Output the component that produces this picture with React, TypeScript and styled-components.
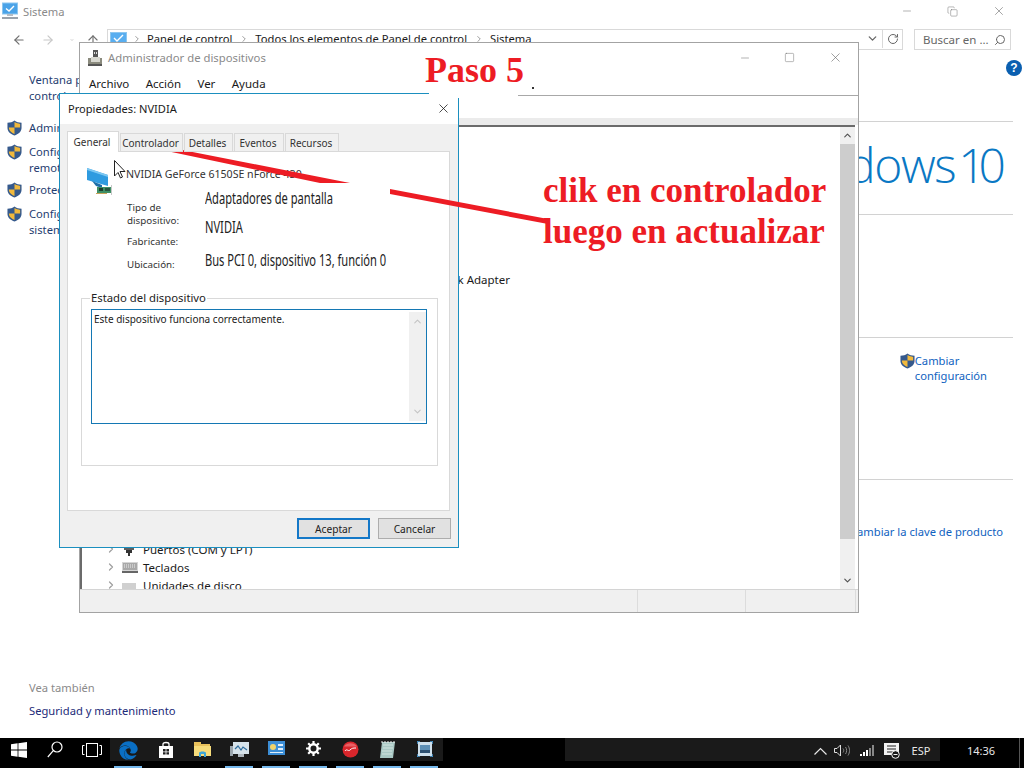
import React from "react";
import styled, { createGlobalStyle } from "styled-components";
import { ChevronRight, ChevronUp, ChevronDown, ArrowLeft, ArrowRight, ArrowUp, RotateCw, Search, Minus, Square, X, Copy } from "lucide-react";
import { FaEdge } from "react-icons/fa";

const Global = createGlobalStyle`
  html, body { margin: 0; padding: 0; background: #fff; overflow: hidden; }
  * { box-sizing: border-box; }
  body { font-family: "Noto Sans", "Open Sans", sans-serif; font-size: 11.2px; color: #1a1a1a; }
`;

const Desktop = styled.div`
  position: relative; width: 1024px; height: 768px; overflow: hidden;
  display: flex; flex-direction: column; background: #fff;
`;

/* --- Sistema window --- */
const SystemWindow = styled.div`flex: 1; display: flex; flex-direction: column; min-height: 0;`;
const TitleBar = styled.div`
  height: 22px; display: flex; align-items: center; padding: 0 2px 0 1px; gap: 4px; color: #8a8a8a;
`;
const Spacer = styled.div`flex: 1;`;
const WinButtons = styled.div`display: flex; align-items: center;`;
const WinButton = styled.div<{ $w: number }>`
  width: ${p => p.$w}px; display: flex; justify-content: center; align-items: center; color: #666;
`;
const NavRow = styled.div`
  margin-top: 7px; height: 21px; display: flex; align-items: center; color: #8a8a8a;
`;
const NavButtons = styled.div`width: 107px; flex: none; display: flex; align-items: center; padding-left: 12px;`;
const NavBtn = styled.div<{ $w: number; $faint?: boolean; $lead?: number }>`
  width: ${p => p.$w}px; flex: none; margin-left: ${p => p.$lead ?? 0}px; display: flex; justify-content: center;
  color: ${p => (p.$faint ? "#c8c8c8" : "#707070")};
`;
const Address = styled.div`
  width: 796px; height: 21px; border: 1px solid #d9d9d9; display: flex; align-items: center;
  padding: 0 0 2px 2px; color: #1a1a1a;
`;
const Crumb = styled.span`display: inline-flex; align-items: center; white-space: nowrap;`;
const CrumbSep = styled.span<{ $w: number }>`display: inline-flex; width: ${p => p.$w}px; justify-content: center; color: #8a8a8a;`;
const AddressTail = styled.div`margin-left: auto; display: flex; height: 19px; align-items: center;`;
const AddressCell = styled.div<{ $line?: boolean }>`
  width: 20px; height: 100%; display: flex; align-items: center; justify-content: center; color: #666;
  ${p => (p.$line ? "border-left: 1px solid #d9d9d9;" : "")}
`;
const SearchBox = styled.div`
  margin-left: 11px; width: 97px; height: 21px; border: 1px solid #d9d9d9; display: flex; align-items: center;
  justify-content: space-between; padding: 0 4px 0 8px; color: #666; font-size: 11.5px; white-space: nowrap;
`;
const Body = styled.div`flex: 1; display: flex; min-height: 0;`;
const Sidebar = styled.div`
  width: 240px; padding: 22px 0 19px 7px; display: flex; flex-direction: column; white-space: nowrap;
`;
const SideLink = styled.div<{ $top: number }>`
  display: flex; gap: 7px; margin-top: ${p => p.$top}px; line-height: 16px; color: #1f3d70;
`;
const SideIconSlot = styled.div`width: 15px; height: 16px; display: flex; align-items: center;`;
const SeeAlso = styled.div`margin-top: auto; margin-left: 22px;`;
const SeeAlsoTitle = styled.div`color: #8a8a8a; line-height: 16px; margin-bottom: 7px;`;
const SeeAlsoLink = styled.div`color: #1c2a78; line-height: 16px;`;
const Main = styled.div`flex: 1; margin-right: 11px; display: flex; flex-direction: column;`;
const HelpRow = styled.div`height: 71px; padding-top: 10px; display: flex; justify-content: flex-end; margin-right: -9px;`;
const HelpIcon = styled.div`
  width: 16px; height: 16px; border-radius: 50%; background: #0a5fb0; color: #fff; font-weight: 700; font-size: 12px;
  display: flex; align-items: center; justify-content: center; font-family: "Liberation Sans", sans-serif;
`;
const Section = styled.section<{ $h?: number }>`
  border-top: 1px solid #d2d2d2; ${p => (p.$h ? `height: ${p.$h}px;` : "flex: 1;")}
`;
const Logo = styled.div`
  display: flex; justify-content: flex-end; padding: 10px 14px 0 0; font-family: "Open Sans", sans-serif;
  font-weight: 300; font-size: 48px; line-height: 65px; color: #0a78c4; white-space: nowrap; letter-spacing: -1.4px;
`;
const LogoNumber = styled.span`margin-left: 3px; letter-spacing: -7px;`;
const ChangeLink = styled.div`
  display: flex; justify-content: flex-end; padding: 15px 26px 0 0; color: #0f62c0; line-height: 15px;
`;
const ProductKey = styled.div`padding: 44px 10px 0 0; text-align: right; color: #0f62c0; line-height: 16px; white-space: nowrap;`;

/* --- Device manager --- */
const DeviceWindow = styled.div`
  position: absolute; left: 79px; top: 42px; width: 780px; height: 571px; background: #fff;
  border: 1px solid #a3a3a3; display: flex; flex-direction: column;
`;
const DeviceTitle = styled.div`
  height: 29px; display: flex; align-items: center; padding-left: 8px; gap: 6px; color: #8a8a8a; font-size: 11.3px; flex: none;
`;
const MenuBar = styled.div`
  height: 24px; flex: none; border-bottom: 1px solid #a8a8a8; display: flex; align-items: center; padding: 0 0 1px 9px; gap: 16.4px; color: #1a1a1a; font-size: 11.5px;
`;
const Toolbar = styled.div`height: 22px; flex: none;`;
const Band = styled.div`height: 7px; flex: none; background: #ebebeb;`;
const Pane = styled.div`
  flex: 1; min-height: 0; display: flex; border-top: 2px solid #6b6b6b; margin-right: 3px; overflow: hidden;
`;
const TreeArea = styled.div`
  flex: 1; border-left: 2px solid #6b6b6b; display: flex; flex-direction: column; justify-content: flex-end; overflow: hidden; padding-left: 25px; font-size: 11.5px;
`;
const TreeRows = styled.div`margin-bottom: -5px;`;
const TreeRow = styled.div`height: 18px; display: flex; align-items: center; color: #1a1a1a; white-space: nowrap;`;
const TreeChildRow = styled(TreeRow)`width: 403px; justify-content: flex-end; margin-bottom: 252px;`;
const TreeChevron = styled.div`width: 14px; margin-left: -2px; margin-right: 3px; color: #a0a0a0; display: flex;`;
const TreeIcon = styled.div`width: 21px; display: flex;`;
const Scrollbar = styled.div`width: 15px; background: #f0f0f0; display: flex; flex-direction: column; flex: none;`;
const ScrollEnd = styled.div<{ $bottom?: boolean }>`
  height: 17px; flex: none; display: flex; align-items: center; justify-content: center; color: #505050;
  ${p => (p.$bottom ? "margin-top: auto;" : "")}
`;
const ScrollThumb = styled.div`height: 395px; flex: none; background: #cdcdcd;`;
const StatusBar = styled.div`
  height: 23px; flex: none; background: #f0f0f0; border-top: 1px solid #d4d4d4;
  display: grid; grid-template-columns: 558px 108px 110px 1fr;
`;
const StatusCell = styled.div`border-right: 1px solid #dcdcdc;`;

/* --- Properties dialog --- */
const Dialog = styled.div`
  position: absolute; left: 59px; top: 93px; width: 400px; height: 455px; background: #fff;
  border: 1px solid #1b8fbf; display: flex; flex-direction: column;
`;
const DialogTitle = styled.div`
  height: 30px; flex: none; display: flex; align-items: center; justify-content: space-between; padding: 0 7px 2px 8px; color: #1a1a1a; font-size: 11.1px;
`;
const DialogBody = styled.div`flex: 1; background: #f0f0f0; padding: 7px 7px 0 7px; display: flex; flex-direction: column; min-height: 0;`;
const Tabs = styled.div`display: flex; height: 21px; flex: none; position: relative; z-index: 1;`;
const Tab = styled.div<{ $w: number; $active?: boolean }>`
  width: ${p => p.$w}px; margin-left: ${p => (p.$active ? 0 : 1)}px;
  height: ${p => (p.$active ? 21 : 19)}px; margin-top: ${p => (p.$active ? 0 : 2)}px;
  background: ${p => (p.$active ? "#fff" : "#f0f0f0")};
  border: 1px solid #d9d9d9; ${p => (p.$active ? "border-bottom: none;" : "")}
  display: flex; align-items: center; justify-content: center; padding-right: 2px; color: #333; font-size: 10px; white-space: nowrap;
`;
const TabPanel = styled.div`
  margin-top: -1px; margin-right: 1px; height: 360px; flex: none; background: #fff; border: 1px solid #d9d9d9; position: relative;
`;
const DeviceHeader = styled.div`
  height: 35px; padding: 15px 0 0 19px; display: flex; gap: 13px; color: #333; font-size: 10.6px; line-height: 14px; white-space: nowrap;
`;
const Details = styled.div`display: flex; height: 104px; padding-left: 59px;`;
const Labels = styled.div`width: 78px; flex: none; padding-top: 14px; color: #333; font-size: 9.8px; line-height: 13px;`;
const LabelItem = styled.div<{ $top?: number }>`margin-top: ${p => p.$top ?? 0}px;`;
const Values = styled.div`
  padding-top: 1px; color: #222; font-size: 16px; line-height: 20px; white-space: nowrap;
  transform: scaleX(0.695); transform-origin: left center;
`;
const ValueItem = styled.div<{ $top?: number }>`margin-top: ${p => p.$top ?? 0}px;`;
const Group = styled.fieldset`
  margin: 0 0 0 13px; padding: 4px 0 0 9px; width: 357px; height: 175px; border: 1px solid #d9d9d9; min-width: 0;
`;
const GroupLegend = styled.legend`margin-left: -1px; padding: 0 1px; font-size: 11.3px; line-height: 14px; color: #222;`;
const StatusBox = styled.div`
  width: 336px; height: 115px; border: 1px solid #1478b4; display: flex; font-size: 10px; color: #222;
`;
const StatusText = styled.div`flex: 1; padding: 2px 2px; line-height: 14px;`;
const MiniScroll = styled.div`
  width: 17px; margin: 2px 0 2px; background: #f0f0f0; display: flex; flex-direction: column; justify-content: space-between; align-items: center; padding: 4px 0; color: #c4c4c4;
`;
const DialogFooter = styled.div`display: flex; justify-content: flex-end; gap: 8px; margin-top: 7px;`;
const DialogButton = styled.div<{ $primary?: boolean }>`
  width: 73px; height: 21px; background: #e1e1e1; display: flex; align-items: center; justify-content: center; color: #222; font-size: 10.2px;
  border: ${p => (p.$primary ? "2px solid #1478c8" : "1px solid #adadad")};
`;

/* --- Annotations --- */
const Overlay = styled.svg`position: absolute; left: 0; top: 0; width: 1024px; height: 768px; pointer-events: none;`;
const WhitePatch = styled.div`
  position: absolute; left: 429px; top: 55px; width: 89px; height: 43px; background: #fff;
`;
const RedNote = styled.div<{ $x: number; $y: number; $size: number }>`
  position: absolute; left: ${p => p.$x}px; top: ${p => p.$y}px; font-family: "Liberation Serif", serif; font-weight: 700;
  font-size: ${p => p.$size}px; line-height: 40px; color: #ed1c24; white-space: nowrap;
`;
const Dot = styled.div`position: absolute; left: 532px; top: 87px; width: 2px; height: 2px; background: #333;`;

/* --- Taskbar --- */
const Taskbar = styled.div`
  height: 30px; flex: none; background: #000; display: flex; color: #fff; position: relative;
`;
const TaskGroup = styled.div`
  display: flex; background: linear-gradient(#1a1a1a 0 23px, #000 23px);
`;
const TaskBtn = styled.div<{ $active?: boolean }>`
  width: 37px; height: 30px; position: relative; display: flex; align-items: flex-start; justify-content: center; padding-top: 3px;
  &::after {
    content: ""; position: absolute; left: 4px; right: 5px; bottom: 0; height: 2px;
    background: ${p => (p.$active ? "#76b9ed" : "transparent")};
  }
`;
const ShellBtn = styled.div<{ $w: number }>`
  width: ${p => p.$w}px; height: 30px; display: flex; align-items: center; justify-content: center; padding-bottom: 7px;
`;
const Blackout = styled.div`margin: 6px 0 0 7px; width: 115px; height: 18px; background: #000;`;
const Filler = styled.div`flex: 1; background: linear-gradient(#1a1a1a 0 23px, #000 23px);`;
const Tray = styled.div`display: flex; width: 132px; background: linear-gradient(#1a1a1a 0 23px, #000 23px);`;
const TrayCell = styled.div<{ $w: number }>`
  width: ${p => p.$w}px; height: 23px; display: flex; align-items: center; justify-content: center; font-size: 11px; color: #e8e8e8; padding-top: 2px;
`;
const Clock = styled.div`
  width: 84px; display: flex; height: 23px; align-items: center; padding: 2px 0 0 27px; font-size: 11px; color: #e8e8e8;
  position: relative;
  &::after { content: ""; position: absolute; right: 4px; top: 0; width: 1px; height: 30px; background: #555; }
`;

/* --- Icons --- */
const Shield = () => (
  <svg width="15" height="16" viewBox="0 0 16 17">
    <path d="M8 .5C10 2 12.5 2.8 15.5 3V8.5C15.5 12.5 12 15 8 16.5C4 15 .5 12.5.5 8.5V3C3.5 2.8 6 2 8 .5Z" fill="#35598c" />
    <path d="M8 2.2C10 3.4 12 4 14 4.1V8H8Z" fill="#f1b93c" />
    <path d="M8 8V15C5 13.8 2 11.5 2 8Z" fill="#f1b93c" />
  </svg>
);
const SystemIcon = () => (
  <svg width="18" height="18" viewBox="0 0 18 18">
    <rect x="1.5" y="1" width="15" height="11" fill="#4aa3e8" stroke="#8cc6ef" />
    <path d="M5 6.5l3 2.5 5-5" fill="none" stroke="#fff" strokeWidth="1.4" />
    <rect x="6" y="12" width="6" height="2" fill="#b4bcc4" />
    <rect x="1" y="15" width="16" height="2" fill="#9aa3ac" />
  </svg>
);
const AddressIcon = () => (
  <svg width="17" height="14" viewBox="0 0 17 14">
    <rect x=".5" y=".5" width="16" height="13" fill="#58aef0" stroke="#8cc6ef" />
    <path d="M4 6l3 3 6-6" fill="none" stroke="#fff" strokeWidth="1.4" />
  </svg>
);
const DeviceIcon = () => (
  <svg width="14" height="16" viewBox="0 0 14 16">
    <rect x="5" y="0" width="5" height="7" fill="#555" />
    <rect x="6" y="2" width="1" height="2" fill="#ddd" />
    <rect x="8" y="2" width="1" height="2" fill="#ddd" />
    <path d="M0 8h14v7H0z" fill="#8b8b7e" />
    <rect x="3" y="7" width="9" height="5" fill="#d8d8d0" />
    <rect x="0" y="14" width="14" height="2" fill="#555" />
  </svg>
);
const NvidiaIcon = () => (
  <svg width="26" height="28" viewBox="0 0 26 28">
    <polygon points="0,1 21,8 21,19 0,13" fill="#2f9be0" />
    <polygon points="0,1 21,8 21,10 0,3" fill="#7cc7f2" />
    <polygon points="5,14 15,18 15,21 9,19" fill="#1d6ea8" />
    <rect x="10" y="20" width="15" height="6" fill="#3f8f66" />
    <rect x="12" y="21" width="4" height="3" fill="#1b3d2c" />
    <rect x="18" y="21" width="5" height="3" fill="#27563f" />
    <rect x="9" y="26" width="11" height="1" fill="#c9a45a" />
    <rect x="24" y="18" width="1" height="10" fill="#c8c8c8" />
  </svg>
);
const Cursor = styled.svg`position: absolute; left: 46px; top: 8px;`;
const PortIcon = () => (
  <svg width="14" height="14" viewBox="0 0 14 14">
    <rect x="2" y="0" width="10" height="8" fill="#5f5f5f" />
    <rect x="3" y="2" width="8" height="1" fill="#9a9a9a" />
    <rect x="4" y="8" width="6" height="3" fill="#333" />
    <rect x="6" y="11" width="2" height="3" fill="#333" />
  </svg>
);
const KeyboardIcon = () => (
  <svg width="16" height="11" viewBox="0 0 16 11">
    <rect width="16" height="11" fill="#d6d6d6" />
    <rect x="1" y="1" width="14" height="7" fill="#a9a9a9" />
    <path d="M2 3h12M2 5h12" stroke="#eee" strokeDasharray="1 1" />
    <rect y="9" width="16" height="2" fill="#666" />
  </svg>
);
const DiskIcon = () => (
  <svg width="14" height="14" viewBox="0 0 14 14">
    <rect y="5" width="14" height="7" fill="#d0d0d0" />
  </svg>
);
const WinLogo = () => (
  <svg width="16" height="16" viewBox="0 0 16 16" fill="#fff">
    <path d="M0 2.3L6.6 1.3V7.5H0ZM7.4 1.2L16 0V7.5H7.4ZM0 8.4H6.6V14.7L0 13.7ZM7.4 8.4H16V16L7.4 14.8Z" />
  </svg>
);
const SearchGlyph = () => (
  <svg width="16" height="17" viewBox="0 0 16 17" fill="none" stroke="#fff" strokeWidth="1.2">
    <circle cx="10" cy="6" r="5" />
    <path d="M6.3 9.7L.8 16" />
  </svg>
);
const TaskViewGlyph = () => (
  <svg width="20" height="14" viewBox="0 0 20 14" fill="none" stroke="#fff" strokeWidth="1">
    <rect x="4.5" y=".5" width="11" height="13" />
    <path d="M2.5 2.5H.5V11.5H2.5M17.5 2.5H19.5V11.5H17.5" />
  </svg>
);
const StoreIcon = () => (
  <svg width="16" height="18" viewBox="0 0 16 18">
    <path d="M1 5H15V17H1Z" fill="#fff" />
    <path d="M5 5V3C5 1 11 1 11 3V5" fill="none" stroke="#fff" strokeWidth="1.3" />
    <path d="M5 8H7.6V10.4H5ZM8.4 8H11V10.4H8.4ZM5 11.2H7.6V13.6H5ZM8.4 11.2H11V13.6H8.4Z" fill="#222" />
  </svg>
);
const FolderIcon = () => (
  <svg width="18" height="17" viewBox="0 0 18 17">
    <path d="M0 1H7V3H16V15H0Z" fill="#e9c15b" />
    <path d="M0 5H17V15H0Z" fill="#f7dc7b" />
    <path d="M5 16V12C5 10 12 10 12 12V16H10V13H7V16Z" fill="#3fa7d8" />
  </svg>
);
const MonitorChart = () => (
  <svg width="20" height="18" viewBox="0 0 20 18">
    <rect x="0" y="5" width="3" height="10" fill="#9aa5ad" />
    <rect x="3" y="1" width="16" height="12" fill="#d6e2ea" />
    <path d="M5 8l3-3 3 4 2-3 4 3" fill="none" stroke="#2f6d9e" strokeWidth="1.2" />
    <rect x="8" y="13" width="6" height="3" fill="#aeb6bd" />
  </svg>
);
const ControlIcon = () => (
  <svg width="17" height="15" viewBox="0 0 17 15">
    <rect width="17" height="14" fill="#3c8ed6" />
    <circle cx="5" cy="6" r="3" fill="#f1d36b" />
    <rect x="10" y="3" width="5" height="2" fill="#dfeefa" />
    <rect x="10" y="7" width="5" height="2" fill="#dfeefa" />
    <rect x="2" y="11" width="13" height="1" fill="#dfeefa" />
  </svg>
);
const GearIcon = () => (
  <svg width="15" height="15" viewBox="0 0 15 15">
    <circle cx="7.5" cy="7.5" r="4.2" fill="none" stroke="#fff" strokeWidth="2.4" />
    <path d="M7.5 0V3M7.5 12V15M0 7.5H3M12 7.5H15M2.2 2.2L4.2 4.2M10.8 10.8L12.8 12.8M2.2 12.8L4.2 10.8M10.8 4.2L12.8 2.2" stroke="#fff" strokeWidth="2.2" />
  </svg>
);
const RedBall = () => (
  <svg width="17" height="17" viewBox="0 0 17 17">
    <circle cx="8.5" cy="8.5" r="8" fill="#d8262c" />
    <path d="M2 5.5A8 8 0 0 1 15 5.5Z" fill="#e96065" />
    <path d="M3 10c2-3 3 1 5-1s3-2 6-2" fill="none" stroke="#fff" strokeWidth="1" />
  </svg>
);
const NotepadIcon = () => (
  <svg width="15" height="18" viewBox="0 0 15 18">
    <path d="M2 1H15L13 17H0Z" fill="#a9c8c4" />
    <path d="M3 4H13M3 7H13M2 10H12M2 13H12" stroke="#d2e4e0" />
    <path d="M2 0V2M5 0V2M8 0V2M11 0V2M14 0V2" stroke="#eee" />
  </svg>
);
const PictureIcon = () => (
  <svg width="16" height="16" viewBox="0 0 16 16">
    <rect x="1" y="1" width="14" height="14" fill="#cfe0ec" />
    <rect x="3" y="4" width="10" height="5" fill="#5d8fb5" />
    <rect x="3" y="9" width="10" height="3" fill="#2e5070" />
    <path d="M0 3V0H3M13 0H16V3M16 13V16H13M3 16H0V13" fill="none" stroke="#4a9ad4" strokeWidth="1.5" />
  </svg>
);
const TrayChevron = () => (
  <svg width="13" height="8" viewBox="0 0 13 8" fill="none" stroke="#e8e8e8" strokeWidth="1.2"><path d="M.5 7.5L6.5 1.5L12.5 7.5" /></svg>
);
const Speaker = () => (
  <svg width="17" height="13" viewBox="0 0 17 13" fill="none" stroke="#e0e0e0">
    <path d="M.5 4.5H3L6.5 1V12L3 8.5H.5Z" />
    <path d="M9 4.5C10 5.5 10 7.5 9 8.5M11.5 3C13 5 13 8 11.5 10M14 1.5C16 4.5 16 8.5 14 11.5" stroke="#8a8a8a" />
  </svg>
);
const Signal = () => (
  <svg width="15" height="11" viewBox="0 0 15 11">
    <rect x="0" y="9" width="2" height="2" fill="#fff" />
    <rect x="3" y="7" width="2" height="4" fill="#fff" />
    <rect x="6" y="5" width="2" height="6" fill="#fff" />
    <rect x="9" y="3" width="2" height="8" fill="#888" />
    <rect x="12" y="0" width="2" height="11" fill="#888" />
  </svg>
);
const NotifyIcon = () => (
  <svg width="17" height="16" viewBox="0 0 17 16">
    <rect x="0" y="0" width="15" height="12" fill="#f4f4f4" />
    <path d="M3 3H12M3 6H12M3 9H9" stroke="#222" />
    <circle cx="11.5" cy="11.5" r="3.8" fill="#1a1a1a" stroke="#f4f4f4" />
    <path d="M9.5 11.5H13.5" stroke="#f4f4f4" />
  </svg>
);

export default function App() {
  return (
    <Desktop>
      <Global />
      <SystemWindow>
        <TitleBar>
          <SystemIcon />
          <span>Sistema</span>
          <Spacer />
          <WinButtons>
            <WinButton $w={45}><Minus size={12} strokeWidth={1} /></WinButton>
            <WinButton $w={46}><Copy size={11} strokeWidth={1} /></WinButton>
            <WinButton $w={47}><X size={14} strokeWidth={1} /></WinButton>
          </WinButtons>
        </TitleBar>
        <NavRow>
          <NavButtons>
            <NavBtn $w={14}><ArrowLeft size={14} /></NavBtn>
            <NavBtn $w={44} $faint><ArrowRight size={14} /></NavBtn>
            <NavBtn $w={4}><ChevronDown size={10} /></NavBtn>
            <NavBtn $w={26} $lead={6}><ArrowUp size={14} /></NavBtn>
          </NavButtons>
          <Address>
            <AddressIcon />
            <CrumbSep $w={20}><ChevronRight size={10} /></CrumbSep>
            <Crumb>Panel de control</Crumb>
            <CrumbSep $w={23}><ChevronRight size={10} /></CrumbSep>
            <Crumb>Todos los elementos de Panel de control</Crumb>
            <CrumbSep $w={23}><ChevronRight size={10} /></CrumbSep>
            <Crumb>Sistema</Crumb>
            <AddressTail>
              <AddressCell><ChevronDown size={13} strokeWidth={2.4} /></AddressCell>
              <AddressCell $line><RotateCw size={12} /></AddressCell>
            </AddressTail>
          </Address>
          <SearchBox>
            <span>Buscar en ...</span>
            <Search size={12} style={{ transform: "scaleX(-1)" }} />
          </SearchBox>
        </NavRow>
        <Body>
          <Sidebar>
            <SideLink $top={0}><SideIconSlot /><span>Ventana principal del panel de<br />control</span></SideLink>
            <SideLink $top={16}><SideIconSlot><Shield /></SideIconSlot><span>Administrador de dispositivos</span></SideLink>
            <SideLink $top={8}><SideIconSlot><Shield /></SideIconSlot><span>Configuración de Acceso<br />remoto</span></SideLink>
            <SideLink $top={6}><SideIconSlot><Shield /></SideIconSlot><span>Protección del sistema</span></SideLink>
            <SideLink $top={8}><SideIconSlot><Shield /></SideIconSlot><span>Configuración avanzada del<br />sistema</span></SideLink>
            <SeeAlso>
              <SeeAlsoTitle>Vea también</SeeAlsoTitle>
              <SeeAlsoLink>Seguridad y mantenimiento</SeeAlsoLink>
            </SeeAlso>
          </Sidebar>
          <Main>
            <HelpRow><HelpIcon>?</HelpIcon></HelpRow>
            <Section $h={93}><Logo>Windows<LogoNumber>10</LogoNumber></Logo></Section>
            <Section $h={123} />
            <Section $h={142}>
              <ChangeLink>
                <Shield />
                <span>Cambiar<br />configuración</span>
              </ChangeLink>
            </Section>
            <Section><ProductKey>Cambiar la clave de producto</ProductKey></Section>
          </Main>
        </Body>
      </SystemWindow>

      <Taskbar>
        <ShellBtn $w={37}><WinLogo /></ShellBtn>
        <ShellBtn $w={36}><SearchGlyph /></ShellBtn>
        <ShellBtn $w={37}><TaskViewGlyph /></ShellBtn>
        <TaskGroup>
          <TaskBtn $active><FaEdge size={19} color="#0a6fc4" /></TaskBtn>
          <TaskBtn><StoreIcon /></TaskBtn>
          <TaskBtn><FolderIcon /></TaskBtn>
          <TaskBtn $active><MonitorChart /></TaskBtn>
          <TaskBtn $active><ControlIcon /></TaskBtn>
          <TaskBtn $active><GearIcon /></TaskBtn>
          <TaskBtn $active><RedBall /></TaskBtn>
          <TaskBtn $active><NotepadIcon /></TaskBtn>
          <TaskBtn $active><PictureIcon /></TaskBtn>
        </TaskGroup>
        <Blackout />
        <Filler />
        <Tray>
          <TrayCell $w={24}><TrayChevron /></TrayCell>
          <TrayCell $w={20}><Speaker /></TrayCell>
          <TrayCell $w={30}><Signal /></TrayCell>
          <TrayCell $w={20}><NotifyIcon /></TrayCell>
          <TrayCell $w={38}>ESP</TrayCell>
        </Tray>
        <Clock>14:36</Clock>
      </Taskbar>

      <DeviceWindow>
        <DeviceTitle>
          <DeviceIcon />
          <span>Administrador de dispositivos</span>
          <Spacer />
          <WinButtons>
            <WinButton $w={45}><Minus size={12} strokeWidth={1} /></WinButton>
            <WinButton $w={45}><Square size={11} strokeWidth={1} /></WinButton>
            <WinButton $w={46}><X size={15} strokeWidth={1} /></WinButton>
          </WinButtons>
        </DeviceTitle>
        <MenuBar>
          <span>Archivo</span><span>Acción</span><span>Ver</span><span>Ayuda</span>
        </MenuBar>
        <Toolbar />
        <Band />
        <Pane>
          <TreeArea>
            <TreeRows>
              <TreeChildRow>Microsoft Kernel Debug Network Adapter</TreeChildRow>
              <TreeRow><TreeChevron><ChevronRight size={12} strokeWidth={2.5} /></TreeChevron><TreeIcon><PortIcon /></TreeIcon>Puertos (COM y LPT)</TreeRow>
              <TreeRow><TreeChevron><ChevronRight size={12} strokeWidth={2.5} /></TreeChevron><TreeIcon><KeyboardIcon /></TreeIcon>Teclados</TreeRow>
              <TreeRow><TreeChevron><ChevronRight size={12} strokeWidth={2.5} /></TreeChevron><TreeIcon><DiskIcon /></TreeIcon>Unidades de disco</TreeRow>
            </TreeRows>
          </TreeArea>
          <Scrollbar>
            <ScrollEnd><ChevronUp size={11} strokeWidth={2.5} /></ScrollEnd>
            <ScrollThumb />
            <ScrollEnd $bottom><ChevronDown size={11} strokeWidth={2.5} /></ScrollEnd>
          </Scrollbar>
        </Pane>
        <StatusBar><StatusCell /><StatusCell /><StatusCell /></StatusBar>
      </DeviceWindow>

      <Dialog>
        <DialogTitle>
          <span>Propiedades: NVIDIA</span>
          <X size={15} strokeWidth={1.2} color="#111" />
        </DialogTitle>
        <DialogBody>
          <Tabs>
            <Tab $w={52} $active>General</Tab>
            <Tab $w={63}>Controlador</Tab>
            <Tab $w={49}>Detalles</Tab>
            <Tab $w={50}>Eventos</Tab>
            <Tab $w={54}>Recursos</Tab>
          </Tabs>
          <TabPanel>
            <DeviceHeader>
              <NvidiaIcon />
              <span>NVIDIA GeForce 6150SE nForce 430</span>
            </DeviceHeader>
            <Cursor width="12" height="19" viewBox="0 0 12 19">
              <path d="M.5.5V16L4 12.5L6.5 18L8.5 17L6 11.5H11Z" fill="#fff" stroke="#222" />
            </Cursor>
            <Details>
              <Labels>
                <LabelItem>Tipo de<br />dispositivo:</LabelItem>
                <LabelItem $top={8}>Fabricante:</LabelItem>
                <LabelItem $top={10}>Ubicación:</LabelItem>
              </Labels>
              <Values>
                <ValueItem>Adaptadores de pantalla</ValueItem>
                <ValueItem $top={9}>NVIDIA</ValueItem>
                <ValueItem $top={13}>Bus PCI 0, dispositivo 13, función 0</ValueItem>
              </Values>
            </Details>
            <Group>
              <GroupLegend>Estado del dispositivo</GroupLegend>
              <StatusBox>
                <StatusText>Este dispositivo funciona correctamente.</StatusText>
                <MiniScroll>
                  <ChevronUp size={11} strokeWidth={2.4} />
                  <ChevronDown size={11} strokeWidth={2.4} />
                </MiniScroll>
              </StatusBox>
            </Group>
          </TabPanel>
          <DialogFooter>
            <DialogButton $primary>Aceptar</DialogButton>
            <DialogButton>Cancelar</DialogButton>
          </DialogFooter>
        </DialogBody>
      </Dialog>

      <WhitePatch />
      <Dot />
      <Overlay viewBox="0 0 1024 768">
        <polygon points="162,146 350,183 320,183 162,150" fill="#ed1c24" />
        <polygon points="390,189 548,219 548,224 390,194" fill="#ed1c24" />
      </Overlay>
      <RedNote $x={425} $y={50} $size={36}>Paso 5</RedNote>
      <RedNote $x={543} $y={171} $size={35}>clik en controlador</RedNote>
      <RedNote $x={543} $y={212} $size={35}>luego en actualizar</RedNote>
    </Desktop>
  );
}
